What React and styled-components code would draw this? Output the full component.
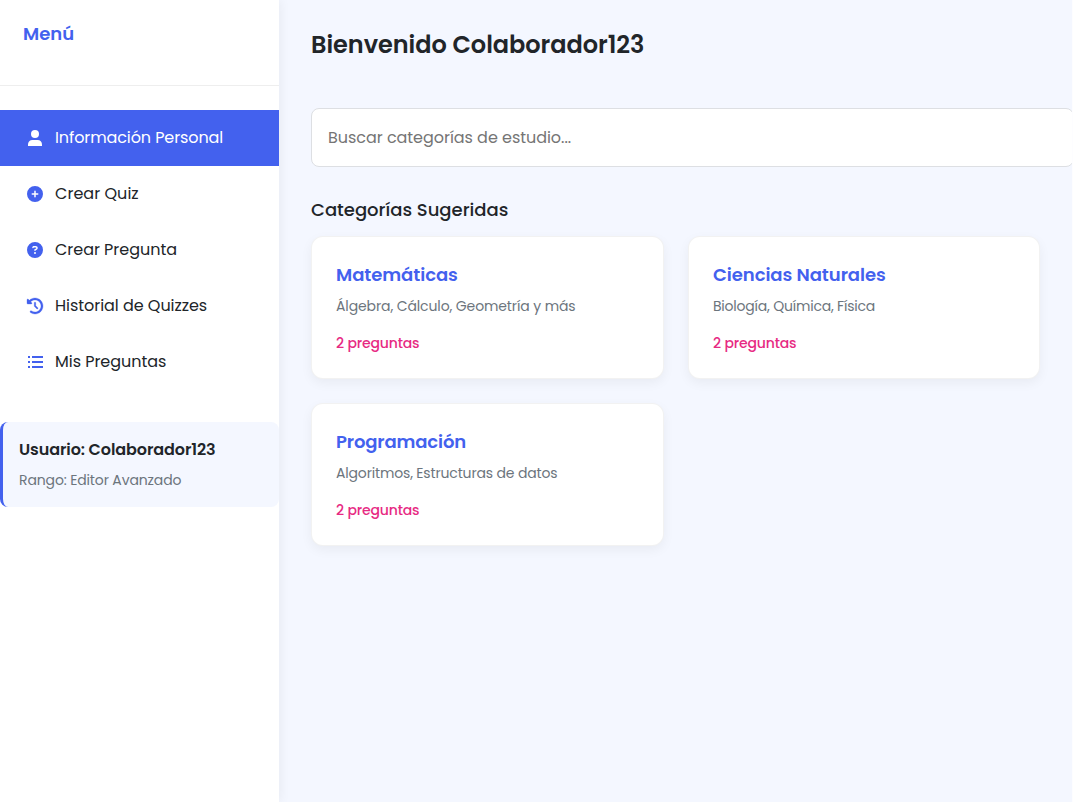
import React from "react";
import styled, { createGlobalStyle } from "styled-components";
import { FaCirclePlus, FaCircleQuestion, FaClockRotateLeft } from "react-icons/fa6";

const GlobalStyle = createGlobalStyle`
  * { box-sizing: border-box; margin: 0; padding: 0; }
  body {
    font-family: Poppins, Inter, sans-serif;
    font-feature-settings: "cv11";
    background: #fdfdff;
    color: #212529;
    overflow: hidden;
  }
`;

const Page = styled.div`
  display: flex;
  width: 1072px;
  height: 100vh;
  background: #f4f7ff;
  overflow: hidden;
`;

const Sidebar = styled.aside`
  flex: 0 0 279px;
  background: #fff;
  box-shadow: 2px 0 10px rgba(0, 0, 0, 0.05);
`;

const SidebarHeader = styled.div`
  height: 86px;
  padding: 20px 23px;
  border-bottom: 1px solid #eee;
`;

const Track = styled.span`
  letter-spacing: ${(p) => p.$t || 0}px;
  white-space: nowrap;
`;

const MenuTitle = styled.h3`
  font-size: 18px;
  line-height: 27px;
  font-weight: 600;
  color: #4361ee;
`;

const Nav = styled.nav`
  padding: 24px 0;
`;

const NavItem = styled.a`
  display: flex;
  align-items: center;
  gap: 10px;
  height: 56px;
  padding: 0 25px;
  font-size: 16px;
  color: ${(p) => (p.$active ? "#fff" : "#212529")};
  background: ${(p) => (p.$active ? "#4361ee" : "transparent")};
`;

const NavLabel = styled(Track)`
  padding-bottom: 2px;
`;

const NavIcon = styled.span`
  display: flex;
  justify-content: center;
  width: 20px;
  font-size: 16px;
  color: ${(p) => (p.$active ? "#fff" : "#4361ee")};
`;

const HistoryIcon = styled(FaClockRotateLeft)`
  overflow: visible;
  stroke: currentColor;
  stroke-width: 10px;
`;

const UserIcon = () => (
  <svg width="16" height="16" viewBox="0 0 16 16" fill="currentColor">
    <circle cx="8" cy="4" r="4" />
    <path d="M1 16v-1.5C1 11.8 2.8 10 5.4 10h5.2c2.6 0 4.4 1.8 4.4 4.5V16z" />
  </svg>
);

const ListIcon = () => (
  <svg width="16" height="16" viewBox="0 0 16 16" fill="currentColor">
    <path d="M1 2h2v2H1zM1 7h2v2H1zM1 12h2v2H1zM5 2h11v2H5zM5 7h11v2H5zM5 12h11v2H5z" />
  </svg>
);

const UserCard = styled.div`
  margin-top: 8px;
  height: 85px;
  padding: 16px 16px;
  background: #f4f7ff;
  border-left: 3px solid #4361ee;
  border-radius: 8px;
`;

const UserName = styled.p`
  font-size: 16px;
  line-height: 24px;
  font-weight: 600;
`;

const UserRank = styled.p`
  margin-top: 7px;
  font-size: 14px;
  line-height: 22px;
  color: #6c757d;
`;

const Main = styled.main`
  flex: 1;
  min-width: 0;
  padding: 27px 32px;
`;

const Title = styled.h1`
  font-size: 24px;
  line-height: 36px;
  font-weight: 600;
`;

const Search = styled.input`
  display: block;
  width: 763px;
  height: 59px;
  margin-top: 45px;
  padding: 0 16px;
  border: 1px solid #dddfe3;
  border-radius: 8px;
  background: #fff;
  font: inherit;
  font-size: 16px;
  letter-spacing: ${(p) => p.$t}px;
  &::placeholder { color: #757575; }
`;

const Section = styled.h2`
  margin-top: 29px;
  font-size: 18px;
  line-height: 27px;
  font-weight: 500;
`;

const Grid = styled.div`
  display: grid;
  grid-template-columns: 353px 352px;
  gap: 24px;
  margin-top: 13px;
`;

const Card = styled.article`
  height: 143px;
  padding: 24px;
  background: #fff;
  border: 1px solid rgba(0, 0, 0, 0.05);
  border-radius: 12px;
  box-shadow: 0 4px 12px rgba(0, 0, 0, 0.05);
`;

const CardTitle = styled.h3`
  font-size: 18px;
  line-height: 27px;
  font-weight: 600;
  color: #4361ee;
`;

const CardText = styled.p`
  margin-top: 7px;
  font-size: 14px;
  line-height: 22px;
  color: #6c757d;
`;

const CardCount = styled.p`
  margin-top: 15px;
  font-size: 14px;
  line-height: 22px;
  font-weight: 500;
  color: #e72a83;
`;

const items = [
  { icon: UserIcon, label: "Información Personal", t: -0.1, active: true },
  { icon: FaCirclePlus, label: "Crear Quiz", t: 0.03 },
  { icon: FaCircleQuestion, label: "Crear Pregunta", t: -0.03 },
  { icon: HistoryIcon, label: "Historial de Quizzes", t: -0.04 },
  { icon: ListIcon, label: "Mis Preguntas", t: -0.04 },
];

const categories = [
  { name: "Matemáticas", nt: -0.05, text: "Álgebra, Cálculo, Geometría y más", tt: -0.11 },
  { name: "Ciencias Naturales", nt: -0.05, text: "Biología, Química, Física", tt: -0.21 },
  { name: "Programación", nt: -0.14, text: "Algoritmos, Estructuras de datos", tt: -0.16 },
];

export default function App() {
  return (
    <>
      <GlobalStyle />
      <Page>
        <Sidebar>
          <SidebarHeader>
            <MenuTitle><Track $t={0}>Menú</Track></MenuTitle>
          </SidebarHeader>
          <Nav>
            {items.map(({ icon: Icon, label, t, active }) => (
              <NavItem key={label} $active={active}>
                <NavIcon $active={active}><Icon /></NavIcon>
                <NavLabel $t={t}>{label}</NavLabel>
              </NavItem>
            ))}
          </Nav>
          <UserCard>
            <UserName><Track $t={-0.09}>Usuario: Colaborador123</Track></UserName>
            <UserRank><Track $t={-0.13}>Rango: Editor Avanzado</Track></UserRank>
          </UserCard>
        </Sidebar>
        <Main>
          <Title><Track $t={-0.03}>Bienvenido Colaborador123</Track></Title>
          <Search $t={-0.04} placeholder="Buscar categorías de estudio..." />
          <Section><Track $t={0}>Categorías Sugeridas</Track></Section>
          <Grid>
            {categories.map((c) => (
              <Card key={c.name}>
                <CardTitle><Track $t={c.nt}>{c.name}</Track></CardTitle>
                <CardText><Track $t={c.tt}>{c.text}</Track></CardText>
                <CardCount><Track $t={-0.15}>2 preguntas</Track></CardCount>
              </Card>
            ))}
          </Grid>
        </Main>
      </Page>
    </>
  );
}
